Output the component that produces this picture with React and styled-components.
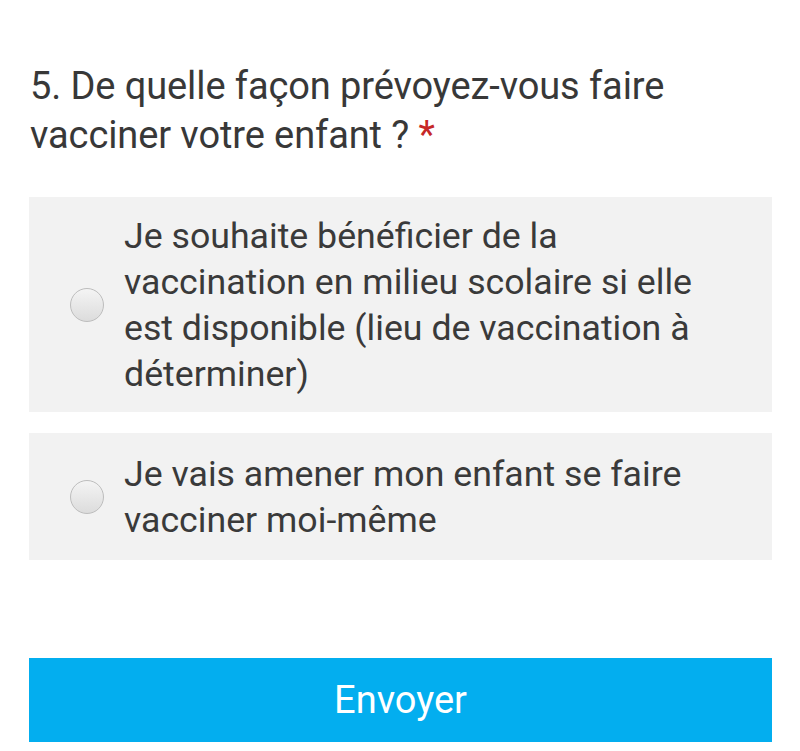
import React from "react";
import { styled, createGlobalStyle } from "styled-components";

const GlobalStyle = createGlobalStyle`
  html, body {
    margin: 0;
    padding: 0;
    background: #ffffff;
  }
  body {
    font-family: Roboto, "Noto Sans", "Liberation Sans", sans-serif;
  }
`;

const Page = styled.div`
  padding: 62px 28px 0 29px;
`;

const Question = styled.div`
  font-size: 38px;
  line-height: 49px;
  color: #383838;
  letter-spacing: -0.1px;
  margin: 0 0 37px 1px;
`;

const Required = styled.span`
  color: #c62828;
`;

const Options = styled.div`
  display: flex;
  flex-direction: column;
  gap: 21px;
`;

const Option = styled.label`
  display: flex;
  align-items: center;
  gap: 20px;
  background: #f2f2f2;
  padding: ${(p) => p.$top}px 50px ${(p) => p.$bottom}px 41px;
  cursor: pointer;
`;

const Radio = styled.span`
  flex: none;
  width: 32px;
  height: 32px;
  border-radius: 50%;
  border: 1px solid #bdbdbd;
  background: linear-gradient(180deg, #f4f4f4 0%, #dcdcdc 100%);
`;

const OptionText = styled.span`
  font-size: 35.7px;
  line-height: 46px;
  color: #3a3a3a;
`;

const Submit = styled.button`
  display: block;
  width: 100%;
  height: 84px;
  margin-top: 98px;
  border: none;
  background: #03aeef;
  color: #ffffff;
  font-family: Roboto, "Noto Sans", "Liberation Sans", sans-serif;
  font-size: 38px;
  cursor: pointer;
`;

const App = () => {
  return (
    <Page>
      <GlobalStyle />
      <Question>
        5. De quelle façon prévoyez-vous faire vacciner votre enfant ?{" "}
        <Required>*</Required>
      </Question>
      <Options>
        <Option $top={16} $bottom={15}>
          <Radio />
          <OptionText>
            Je souhaite bénéficier de la vaccination en milieu scolaire si elle
            est disponible (lieu de vaccination à déterminer)
          </OptionText>
        </Option>
        <Option $top={18} $bottom={17}>
          <Radio />
          <OptionText>
            Je vais amener mon enfant se faire vacciner moi-même
          </OptionText>
        </Option>
      </Options>
      <Submit>Envoyer</Submit>
    </Page>
  );
};

export default App;
